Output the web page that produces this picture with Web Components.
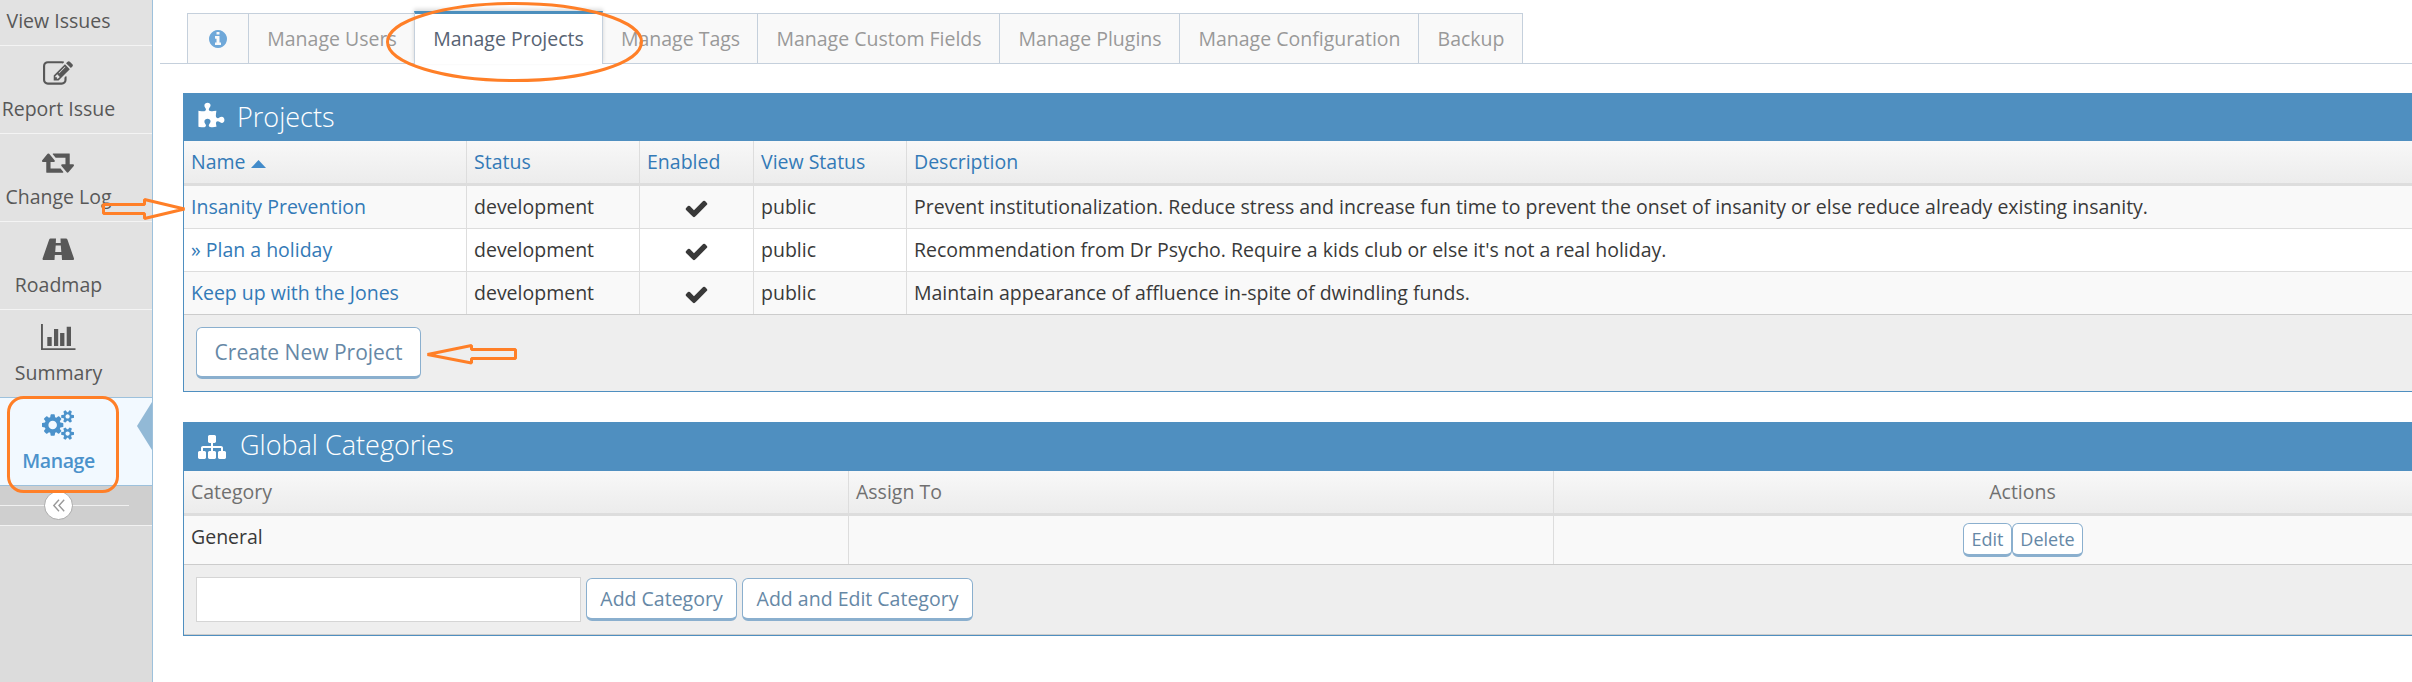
<!DOCTYPE html>
<html lang="en">
<head>
<meta charset="utf-8">
<title>Manage Projects</title>
<style>
html,body{margin:0;padding:0;height:100%;overflow:hidden;background:#fff}
body{font:19.5px/30px "Open Sans",sans-serif;color:#393939}
</style>
</head>
<body>
<manage-app></manage-app>
<script>
const ICONS = {
  pencil: ['0 0 1792 1792', '<path d="M888 1184l116-116-152-152-116 116v56h96v96h56zm440-720q-16-16-33 1l-350 350q-17 17-1 33t33-1l350-350q17-17 1-33zm80 594v190q0 119-84.500 203.500t-203.500 84.500h-832q-119 0-203.500-84.500t-84.500-203.500v-832q0-119 84.500-203.500t203.500-84.500h832q63 0 117 25 15 7 18 23 3 17-9 29l-49 49q-14 14-32 8-23-6-45-6h-832q-66 0-113 47t-47 113v832q0 66 47 113t113 47h832q66 0 113-47t47-113v-126q0-13 9-22l64-64q15-15 35-7t20 29zm-96-738l288 288-672 672h-288v-288zm444 132l-92 92-288-288 92-92q28-28 68-28t68 28l152 152q28 28 28 68t-28 68z"/>'],
  retweet: ['0 0 1920 1792', '<path d="M1280 1504q0 13-9.500 22.500t-22.500 9.500h-960q-8 0-13.500-2t-9-7-5.500-8-3-11.500-1-11.500v-600h-192q-26 0-45-19t-19-45q0-24 15-41l320-384q19-22 49-22t49 22l320 384q15 17 15 41 0 26-19 45t-45 19h-192v384h576q16 0 25 11l160 192q7 10 7 21zm640-416q0 24-15 41l-320 384q-20 23-49 23t-49-23l-320-384q-15-17-15-41 0-26 19-45t45-19h192v-384h-576q-16 0-25-12l-160-192q-7-9-7-20 0-13 9.500-22.500t22.500-9.500h960q8 0 13.500 2t9 7 5.500 8 3 11.500 1 11.500v600h192q26 0 45 19t19 45z"/>'],
  road: ['0 0 32 30', '<path d="M8.500 3.500H14L13.800 8H18.700L18.500 3.500H24Q25 3.500 25.400 4.500L32 23.500Q32.300 25 31 25H20L19.700 20H12.800L12.500 25H1.500Q.2 25 .6 23.500L7.200 4.500Q7.600 3.500 8.500 3.500ZM13.700 10.500L13.200 17H19.300L18.800 10.500Z"/>'],
  bars: ['0 0 32 30', '<path d="M-1 1H.9V25.200H33.500V27H-1ZM5.300 14H9.700V23H5.300ZM12 6H16.200V23H12ZM18.100 10H22.400V23H18.100ZM24.700 3.700H29V23H24.700Z"/>'],
  cogs: ['0 0 1920 1792', '<path d="M896 896q0-106-75-181t-181-75-181 75-75 181 75 181 181 75 181-75 75-181zm768 512q0-52-38-90t-90-38-90 38-38 90q0 53 37.500 90.500t90.500 37.500 90.500-37.500 37.500-90.500zm0-1024q0-52-38-90t-90-38-90 38-38 90q0 53 37.500 90.500t90.500 37.500 90.500-37.500 37.500-90.500zm-384 421v185q0 10-7 19.500t-16 10.500l-155 24q-11 35-32 76 34 48 90 115 7 11 7 20 0 12-7 19-23 30-82.500 89.500t-78.500 59.500q-11 0-21-7l-115-90q-37 19-77 31-11 108-23 155-7 24-30 24h-186q-11 0-20-7.500t-10-17.500l-23-153q-34-10-75-31l-118 89q-7 7-20 7-11 0-21-8-144-133-144-160 0-9 7-19 10-14 41-53t47-61q-23-44-35-82l-152-24q-10-1-17-9.500t-7-19.500v-185q0-10 7-19.500t16-10.500l155-24q11-35 32-76-34-48-90-115-7-11-7-20 0-12 7-20 22-30 82-89t79-59q11 0 21 7l115 90q34-18 77-32 11-108 23-154 7-24 30-24h186q11 0 20 7.500t10 17.500l23 153q34 10 75 31l118-89q8-7 20-7 11 0 21 8 144 133 144 160 0 8-7 19-12 16-42 54t-45 60q23 48 34 82l152 23q10 2 17 10.500t7 19.500zm640 533v140q0 16-149 31-12 27-30 52 51 113 51 138 0 4-4 7-122 71-124 71-8 0-46-47t-52-68q-20 2-30 2t-30-2q-14 21-52 68t-46 47q-2 0-124-71-4-3-4-7 0-25 51-138-18-25-30-52-149-15-149-31v-140q0-16 149-31 13-29 30-52-51-113-51-138 0-4 4-7 4-2 35-20t59-34 30-16q8 0 46 46.500t52 67.500q20-2 30-2t30 2q51-71 92-112l6-2q4 0 124 70 4 3 4 7 0 25-51 138 17 23 30 52 149 15 149 31zm0-1024v140q0 16-149 31-12 27-30 52 51 113 51 138 0 4-4 7-122 71-124 71-8 0-46-47t-52-68q-20 2-30 2t-30-2q-14 21-52 68t-46 47q-2 0-124-71-4-3-4-7 0-25 51-138-18-25-30-52-149-15-149-31v-140q0-16 149-31 13-29 30-52-51-113-51-138 0-4 4-7 4-2 35-20t59-34 30-16q8 0 46 46.500t52 67.500q20-2 30-2t30 2q51-71 92-112l6-2q4 0 124 70 4 3 4 7 0 25-51 138 17 23 30 52 149 15 149 31z"/>'],
  puzzle: ['64 0 1792 1792', '<path d="M1755 1083q0 81-44.500 135t-123.500 54q-41 0-77.500-17.500t-59-38-56.500-38-71-17.500q-110 0-110 124 0 39 16 115t15 115v5q-22 0-33 1-34 3-97.500 11.500t-115.500 13.500-98 5q-61 0-103-26.500t-42-83.500q0-37 17.500-71t38-56.500 38-59 17.500-77.500q0-79-54-123.500t-135-44.500q-84 0-143 45.500t-59 127.500q0 43 15 83t33.500 64.500 33.500 53 15 50.500q0 45-46 89-37 35-117 35-95 0-245-24-9-2-27.500-4t-27.500-4l-13-2q-1 0-3-1-2 0-2-1v-1024q2 1 17.500 3.500t34 5 21.500 3.500q150 24 245 24 80 0 117-35 46-44 46-89 0-22-15-50.500t-33.500-53-33.500-64.500-15-83q0-82 59-127.500t144-45.500q80 0 134 44.500t54 123.500q0 41-17.500 77.500t-38 59-38 56.500-17.500 71q0 57 42 83.500t103 26.500q64 0 180-15t163-17v2q-1 2-3.500 17.500t-5 34-3.500 21.500q-24 150-24 245 0 80 35 117 44 46 89 46 22 0 50.500-15t53-33.500 64.500-33.500 83-15q82 0 127.500 59t45.500 143z"/>'],
  sitemap: ['0 0 1792 1792', '<path d="M1792 1248v320q0 40-28 68t-68 28h-320q-40 0-68-28t-28-68v-320q0-40 28-68t68-28h96v-192h-512v192h96q40 0 68 28t28 68v320q0 40-28 68t-68 28h-320q-40 0-68-28t-28-68v-320q0-40 28-68t68-28h96v-192h-512v192h96q40 0 68 28t28 68v320q0 40-28 68t-68 28h-320q-40 0-68-28t-28-68v-320q0-40 28-68t68-28h96v-192q0-52 38-90t90-38h512v-192h-96q-40 0-68-28t-28-68v-320q0-40 28-68t68-28h320q40 0 68 28t28 68v320q0 40-28 68t-68 28h-96v192h512q52 0 90 38t38 90v192h96q40 0 68 28t28 68z"/>'],
  info: ['128 128 1536 1536', '<path d="M1152 1376v-160q0-14-9-23t-23-9h-96v-512q0-14-9-23t-23-9h-320q-14 0-23 9t-9 23v160q0 14 9 23t23 9h96v320h-96q-14 0-23 9t-9 23v160q0 14 9 23t23 9h448q14 0 23-9t9-23zm-128-896v-160q0-14-9-23t-23-9h-192q-14 0-23 9t-9 23v160q0 14 9 23t23 9h192q14 0 23-9t9-23zm640 416q0 209-103 385.500t-279.500 279.500-385.500 103-385.500-103-279.500-279.500-103-385.500 103-385.500 279.500-279.500 385.500-103 385.500 103 279.500 279.500 103 385.500z"/>'],
  check: ['0 0 1792 1792', '<path d="M1671 566q0 40-28 68l-724 724-136 136q-28 28-68 28t-68-28l-136-136-362-362q-28-28-28-68t28-68l136-136q28-28 68-28t68 28l294 295 656-657q28-28 68-28t68 28l136 136q28 28 28 68z"/>'],
  collapse: ['0 0 12 13', '<path d="M6 .8L.8 6.500 6 12.200M11.200 .8L6 6.500l5.200 5.700" fill="none" stroke="currentColor" stroke-width="1.400"/>'],
  caret: ['0 0 15 8', '<path d="M0 8L7.500 0 15 8Z"/>']
};

function define(name, css, html) {
  customElements.define(name, class extends HTMLElement {
    constructor() {
      super();
      this.attachShadow({ mode: 'open' });
    }
    connectedCallback() {
      const t = document.createElement('template');
      t.innerHTML = `<style>${css}</style>` + (typeof html === 'function' ? html(this) : html);
      this.shadowRoot.replaceChildren(t.content.cloneNode(true));
    }
  });
}

define('fa-icon',
  ':host{display:inline-block;flex:none;line-height:0}svg{display:block;width:100%;height:100%;fill:currentColor;overflow:visible}',
  el => { const [box, body] = ICONS[el.getAttribute('name')]; return `<svg viewBox="${box}">${body}</svg>`; });

define('side-item', `
  :host{display:flex;flex-direction:column;align-items:center;position:relative;box-sizing:border-box;height:88px;padding:13px 35px 0 0;
    background:#e2e2e2;border-bottom:1px solid #f4f4f4;color:#585858;white-space:nowrap}
  :host([short]){height:46px;padding-top:6px}
  :host([before-active]){border-bottom-color:#9dc1dc}
  :host([active]){padding-top:12px;background:#f2f9ff;border-bottom-color:#9dc1dc;color:#4b92cb;font-weight:600;letter-spacing:-.4px}
  fa-icon{width:32px;height:30px;margin:0 1px 5px 0}
  :host([active]) fa-icon{margin-bottom:6px}
  :host([active])::after{content:"";position:absolute;right:0;top:4px;border:24px solid transparent;border-left:0;border-right:15px solid #92b9d6}
  `, el => `${el.hasAttribute('icon') ? `<fa-icon name="${el.getAttribute('icon')}"></fa-icon>` : ''}<span><slot></slot></span>`);

define('side-bar', `
  :host{display:block;box-sizing:border-box;width:153px;border-right:1px solid #9dc1dc;background:#dcdcdc}
  .toggle{display:flex;align-items:center;box-sizing:border-box;height:40px;padding-bottom:1px;background:#cfcfcf;border-bottom:1px solid #f2f2f2}
  .line{height:1px;background:#f0f0f0;width:44px}
  .line.r{width:56px}
  .dot{display:flex;align-items:center;justify-content:center;box-sizing:border-box;width:29px;height:29px;border:1px solid #aaa;border-radius:50%;background:#fff;color:#999}
  .dot fa-icon{width:12px;height:13px}
  `, `
  <side-item short>View Issues</side-item>
  <side-item icon="pencil">Report Issue</side-item>
  <side-item icon="retweet">Change Log</side-item>
  <side-item icon="road">Roadmap</side-item>
  <side-item icon="bars" before-active>Summary</side-item>
  <side-item icon="cogs" active>Manage</side-item>
  <div class="toggle"><span class="line"></span><span class="dot"><fa-icon name="collapse"></fa-icon></span><span class="line r"></span></div>`);

define('nav-tab', `
  :host{display:flex;align-items:center;justify-content:center;box-sizing:border-box;height:51px;margin-right:-1px;flex:none;
    background:#f9f9f9;border:1px solid #c5d0dc;color:#999;white-space:nowrap;padding:1px 0 0 1px}
  :host([active]){height:53px;background:#fff;color:#576373;border-top:3px solid #4c8fbd;border-bottom:0;box-shadow:0 -2px 4px rgba(0,0,0,.15);z-index:1;position:relative;padding:0 0 1px}
  fa-icon{width:18px;height:18px;color:#6fa8d9;margin-right:1px}
  `, el => el.hasAttribute('icon') ? `<fa-icon name="${el.getAttribute('icon')}"></fa-icon>` : '<slot></slot>');

define('nav-tabs', `
  :host{display:flex;align-items:flex-end;box-sizing:border-box;height:64px;margin-left:7px;padding-left:27px;
    background:linear-gradient(#c5d0dc,#c5d0dc) bottom/100% 1px no-repeat}
  `, '<slot></slot>');

define('push-button', `
  :host{display:flex;align-items:center;justify-content:center;box-sizing:border-box;height:43px;background:#fff;color:#6688a6;
    border:1px solid #8aafce;border-bottom-width:3px;border-radius:6px;white-space:nowrap;flex:none}
  :host([large]){height:52px;font-size:21px}
  :host([small]){height:34px;font-size:18px;padding-left:1px}
  `, '<slot></slot>');

define('widget-box', `
  :host{display:block;box-sizing:border-box;width:2309px;border:1px solid #4f8fc0;border-top:0;margin-left:30px}
  header{display:flex;align-items:center;height:var(--head,48px);margin-left:-1px;padding-left:15px;background:#4f8fc0;color:#fff;
    font-size:27px;font-weight:300;box-sizing:border-box}
  header fa-icon{width:28px;height:28px;margin-right:var(--gap,11px)}
  header span{padding-bottom:var(--lift,0)}
  footer{display:flex;align-items:center;gap:5px;box-sizing:border-box;height:var(--foot,77px);padding-left:12px;background:#eee;border-top:1px solid #ccc}
  :host([lined]) footer{border-bottom:1px solid #ccc}
  `, el => `<header><fa-icon name="${el.getAttribute('icon')}"></fa-icon><span>${el.getAttribute('heading')}</span></header>
  <slot></slot><footer><slot name="footer"></slot></footer>`);

define('grid-row', `
  :host{display:grid;grid-template-columns:var(--cols);height:42px;box-sizing:content-box}
  :host([head]){background:linear-gradient(#f8f8f8,#ececec);color:#707070;border-bottom:3px solid #ddd}
  :host([odd]){background:#f9f9f9}
  :host([line]){border-bottom:1px solid #ddd}
  :host([tall]){height:48px}
  `, '<slot></slot>');

define('grid-cell', `
  :host{display:flex;align-items:center;box-sizing:border-box;padding:0 6px 1px 7px;border-left:1px solid #ddd;white-space:nowrap}
  :host([first]){border-left:0}
  :host([center]){justify-content:center;padding-left:6px}
  :host([link]){color:#337ab7}
  :host([up]){padding-bottom:6px}
  `, '<slot></slot>');

define('text-field', ':host{display:block;box-sizing:border-box;width:385px;height:45px;background:#fff;border:1px solid #d5d5d5}', '');

define('mark-up', `
  :host{position:absolute;inset:0;pointer-events:none;z-index:5}
  svg{display:block;width:100%;height:100%;fill:none;stroke:#ff7f27;stroke-width:3}
  `, `<svg>
  <ellipse cx="514.500" cy="42" rx="127" ry="38.500"/>
  <rect x="8.500" y="397.500" width="109" height="94" rx="15"/>
  <path d="M103.500 204.500H144.500V199.500L184.500 209 144.500 218.500V213.500H103.500Z" stroke-linejoin="bevel"/>
  <path d="M515.500 349.500H471.500V345.500L427.500 354.500 471.500 363V358.500H515.500Z" stroke-linejoin="bevel"/></svg>`);

const rows = [
  ['Insanity Prevention', 'Prevent institutionalization. Reduce stress and increase fun time to prevent the onset of insanity or else reduce already existing insanity.'],
  ['» Plan a holiday', "Recommendation from Dr Psycho. Require a kids club or else it's not a real holiday."],
  ['Keep up with the Jones', 'Maintain appearance of affluence in-spite of dwindling funds.']
];

define('project-table', `
  :host{display:block;--cols:282px 173px 114px 153px 1fr}
  .caret{width:15px;height:8px;margin:4px 0 0 5px;color:#428bca}
  .tick{width:25px;height:25px;margin-top:3px}
  `, `
  <grid-row head>
    <grid-cell link first>Name<fa-icon class="caret" name="caret"></fa-icon></grid-cell><grid-cell link>Status</grid-cell>
    <grid-cell link>Enabled</grid-cell><grid-cell link>View Status</grid-cell><grid-cell link>Description</grid-cell>
  </grid-row>` + rows.map(([n, d], i) => `
  <grid-row ${i % 2 ? '' : 'odd'} ${i < 2 ? 'line' : ''}>
    <grid-cell link first>${n}</grid-cell><grid-cell>development</grid-cell>
    <grid-cell center><fa-icon class="tick" name="check"></fa-icon></grid-cell>
    <grid-cell>public</grid-cell><grid-cell>${d}</grid-cell>
  </grid-row>`).join(''));

define('category-table', ':host{display:block;--cols:664px 705px 1fr}', `
  <grid-row head><grid-cell first>Category</grid-cell><grid-cell>Assign To</grid-cell><grid-cell center>Actions</grid-cell></grid-row>
  <grid-row odd tall><grid-cell first up>General</grid-cell><grid-cell></grid-cell>
    <grid-cell center><push-button small style="width:49px">Edit</push-button><push-button small style="width:71px">Delete</push-button></grid-cell></grid-row>`);

define('manage-app', `
  :host{display:flex;position:relative;height:682px;overflow:hidden}
  main{flex:1;min-width:0;overflow:hidden}
  .p{margin-top:29px}
  .g{margin-top:30px;--head:49px;--foot:71px;--gap:14px;--lift:3px}
  `, `
  <side-bar></side-bar>
  <main>
    <nav-tabs>
      <nav-tab icon="info" style="width:62px"></nav-tab>
      <nav-tab style="width:167px">Manage Users</nav-tab>
      <nav-tab active style="width:189px">Manage Projects</nav-tab>
      <nav-tab style="width:156px">Manage Tags</nav-tab>
      <nav-tab style="width:243px">Manage Custom Fields</nav-tab>
      <nav-tab style="width:181px">Manage Plugins</nav-tab>
      <nav-tab style="width:240px">Manage Configuration</nav-tab>
      <nav-tab style="width:105px">Backup</nav-tab>
    </nav-tabs>
    <widget-box class="p" icon="puzzle" heading="Projects">
      <project-table></project-table>
      <push-button slot="footer" large style="width:225px">Create New Project</push-button>
    </widget-box>
    <widget-box class="g" icon="sitemap" heading="Global Categories" lined>
      <category-table></category-table>
      <text-field slot="footer"></text-field>
      <push-button slot="footer" style="width:151px">Add Category</push-button>
      <push-button slot="footer" style="width:231px">Add and Edit Category</push-button>
    </widget-box>
  </main>
  <mark-up></mark-up>`);
</script>
</body>
</html>
